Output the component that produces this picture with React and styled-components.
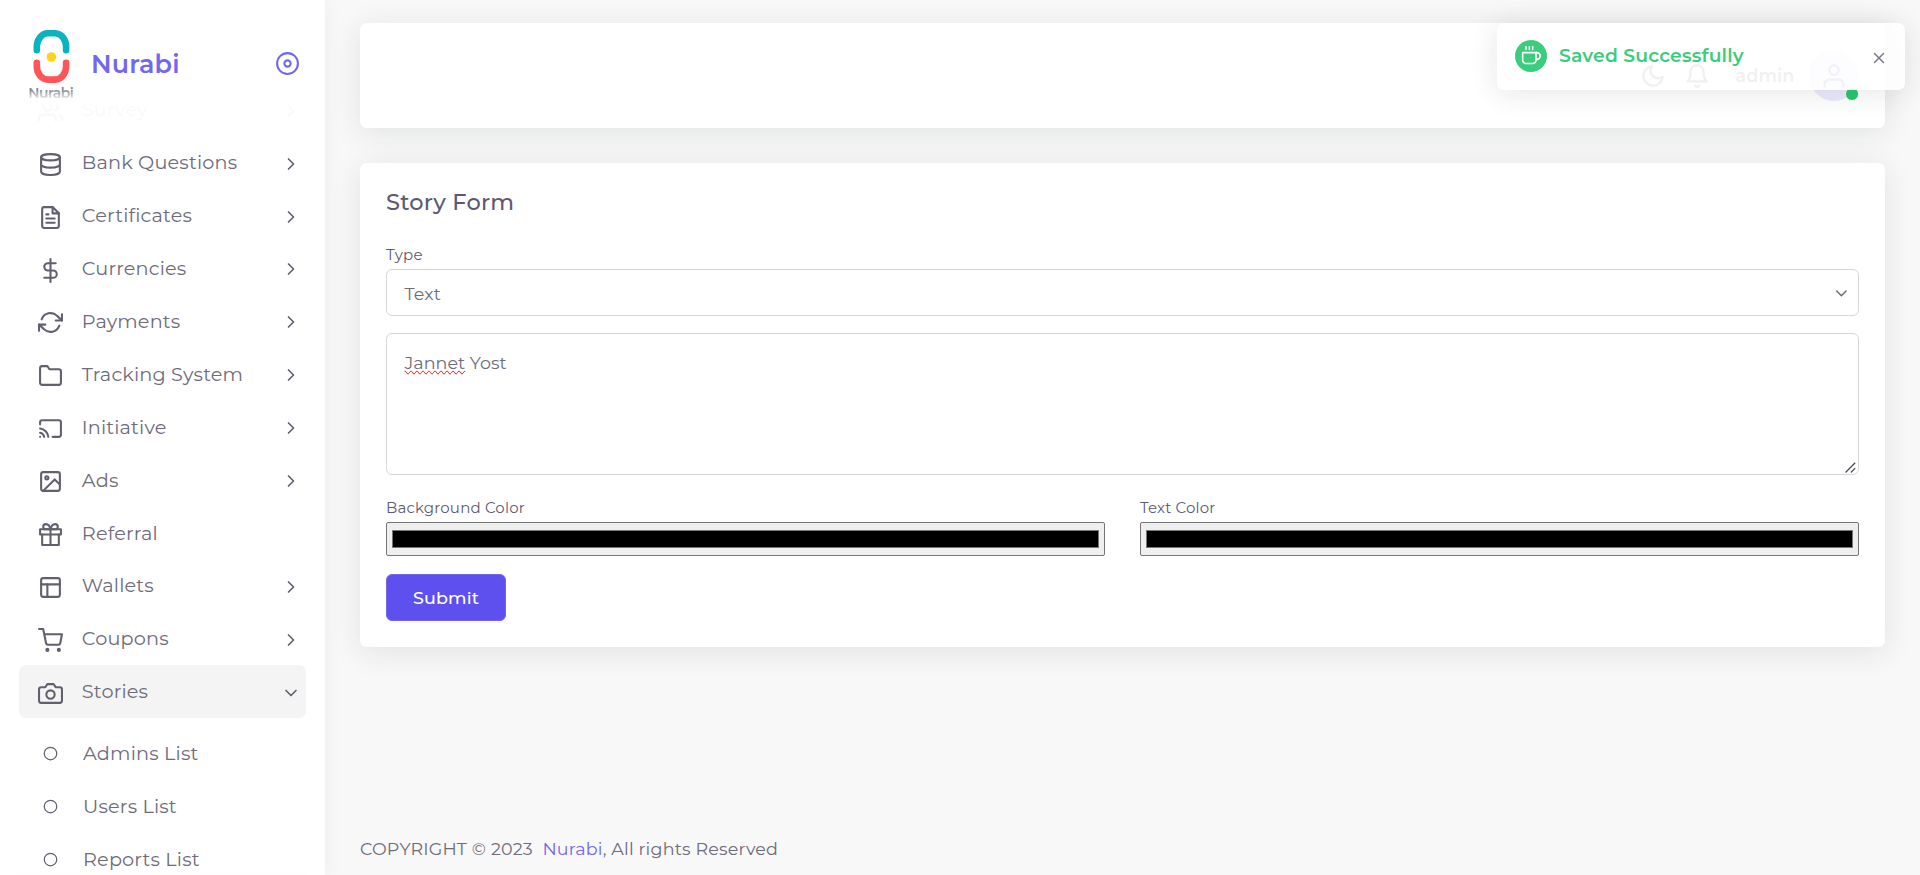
import React from 'react';
import styled, { createGlobalStyle, css } from 'styled-components';
import {
  FiBell, FiCamera, FiCast, FiChevronDown, FiChevronRight, FiCircle, FiCoffee, FiDatabase,
  FiDisc, FiDollarSign, FiFileText, FiFolder, FiGift, FiImage, FiLayout, FiMoon,
  FiRefreshCw, FiShoppingCart, FiUser, FiUsers, FiX,
} from 'react-icons/fi';

const color = {
  body: '#6e6b7b',
  heading: '#5e5873',
  icon: '#625f6e',
  primary: '#7367f0',
  success: '#28c76f',
  border: '#d8d6de',
  page: '#f8f8f8',
};

const Global = createGlobalStyle`
  *, *::before, *::after { box-sizing: border-box; }
  body {
    margin: 0;
    overflow: hidden;
    background: ${color.page};
    color: ${color.body};
    font-family: Montserrat, Inter, "Liberation Sans", sans-serif;
    font-size: 17.5px;
    font-weight: 400;
    line-height: 1.45;
    letter-spacing: 0.175px;
  }
  svg { display: block; flex-shrink: 0; overflow: visible; }
`;

const Page = styled.div`
  display: flex;
  width: 100%;
  height: 875px;
  overflow: hidden;
`;

const Sidebar = styled.aside`
  position: relative;
  z-index: 2;
  flex: 0 0 325px;
  height: 100%;
  overflow: visible;
  background: #fff;
  box-shadow: 0 0 19px rgba(34, 41, 47, 0.05);
`;

const Brand = styled.header`
  position: relative;
  z-index: 3;
  display: flex;
  align-items: center;
  height: 127px;
  margin-bottom: -43.4px;
  padding: 0 25px 0 26px;
`;

const BrandName = styled.h2`
  flex: 1;
  margin: 0 0 0 15px;
  color: ${color.primary};
  font-size: 25.4px;
  font-weight: 600;
  line-height: 1;
`;

const BrandPin = styled.span`
  color: ${color.primary};
`;

const ScrollFade = styled.div`
  position: absolute;
  z-index: 2;
  top: 80px;
  left: 0;
  right: 0;
  height: 55px;
  background: linear-gradient(#fff 43%, rgba(255, 255, 255, 0.97) 46%, rgba(255, 255, 255, 0.95) 74%, #fff 75%);
`;

const Menu = styled.nav`
  display: flex;
  flex-direction: column;
  height: 791.4px;
  padding: 0 19px;
  overflow: hidden;
`;

const MenuRow = styled.a`
  display: flex;
  flex: 0 0 52.9px;
  align-items: center;
  padding: 0 5.5px 0 19px;
  border-radius: 7px;
  color: ${color.body};
  font-size: 19.25px;
  ${(p) => p.$open && css`background: #f4f4f4; margin-bottom: 8.4px;`}

  > svg { color: ${color.icon}; position: relative; top: 1.3px; }
  > svg:last-child { top: 0.7px; }
`;

const MenuText = styled.span`
  flex: 1;
  margin-left: 18.8px;
  line-height: 1;
`;

const SubRow = styled(MenuRow)`
  flex-basis: 53px;
  padding-left: 24.4px;

  > svg { top: 0.5px; }
  ${MenuText} { margin-left: 24.6px; }
`;

const ActiveRow = styled.div`
  flex: 0 0 53px;
  border-radius: 5px;
  background: ${color.primary};
  box-shadow: 0 0 12px rgba(115, 103, 240, 0.6);
`;

const Content = styled.main`
  display: flex;
  flex: 1;
  flex-direction: column;
  min-width: 0;
  padding: 23px 35px 0;
`;

const cardLook = css`
  border-radius: 6.5px;
  background: #fff;
  box-shadow: 0 5px 30px rgba(34, 41, 47, 0.1);
`;

const Navbar = styled.header`
  ${cardLook}
  display: flex;
  flex: 0 0 105px;
  align-items: center;
  justify-content: flex-end;
  margin-bottom: 35px;
  padding-right: 26px;
`;

const NavIcon = styled.span`
  margin-right: 17.5px;
`;

const UserName = styled.span`
  margin: 0 14.5px 0 8px;
  font-weight: 600;
  line-height: 1;
`;

const Avatar = styled.span`
  position: relative;
  display: flex;
  align-items: center;
  justify-content: center;
  width: 50px;
  height: 50px;
  border-radius: 50%;
  background: rgba(115, 103, 240, 0.14);
  color: ${color.primary};
`;

const Status = styled.i`
  position: absolute;
  right: 0;
  bottom: 0;
  width: 13.75px;
  height: 13.75px;
  border: 1px solid #fff;
  border-radius: 50%;
  background: ${color.success};
`;

const Card = styled.section`
  ${cardLook}
  flex: 0 0 484px;
  padding: 26px;
`;

const Title = styled.h4`
  margin: 0 0 29px;
  color: ${color.heading};
  font-size: 22.5px;
  font-weight: 500;
  letter-spacing: 0.22px;
  line-height: 27px;
`;

const Field = styled.div`
  flex: 1;
  margin-bottom: ${(p) => p.$gap}px;
`;

const Label = styled.label`
  display: block;
  margin-bottom: 5px;
  color: ${color.heading};
  font-size: 15px;
  line-height: 19px;
`;

const Select = styled.div`
  display: flex;
  align-items: center;
  justify-content: space-between;
  height: 47px;
  padding: 2px 7.5px 0 17.5px;
  border: 1px solid ${color.border};
  border-radius: 6px;
`;

const TextBox = styled.div`
  position: relative;
  height: 142px;
  margin-bottom: 23px;
  padding: 15.5px 17.5px;
  border: 1px solid ${color.border};
  border-radius: 6px;
  letter-spacing: 0.05px;
`;

const Grip = styled.svg`
  position: absolute;
  right: 2px;
  bottom: 1px;
`;

const Misspelled = styled.span`
  text-decoration-line: spelling-error;
`;

const Columns = styled.div`
  display: flex;
  gap: 35px;
`;

const ColorInput = styled.input`
  display: block;
  width: 100%;
  height: 34px;
  padding: 2px;
  border: 1px solid #767676;
  border-radius: 2px;
  background: #efefef;

  &::-webkit-color-swatch-wrapper { padding: 5px 3px; }
  &::-webkit-color-swatch { border: 1px solid #777; }
`;

const Submit = styled.button`
  display: block;
  width: 120px;
  height: 47px;
  padding: 0;
  border: 1px solid ${color.primary};
  border-radius: 6px;
  background: #5e50ee;
  color: #fff;
  font: inherit;
  font-weight: 500;
  letter-spacing: 0.15px;
`;

const Footer = styled.footer`
  margin-top: auto;
  padding-bottom: 14px;
  white-space: pre;

  a { color: ${color.primary}; }
`;

const Toast = styled.div`
  position: absolute;
  z-index: 5;
  top: 23px;
  right: 15px;
  display: flex;
  width: 408px;
  height: 67px;
  padding: 17px 17px 0 17.5px;
  border-radius: 6.5px;
  background: #fff;
  box-shadow: 0 3px 28px rgba(34, 41, 47, 0.12);
  opacity: 0.9;
`;

const ToastIcon = styled.span`
  display: flex;
  align-items: center;
  justify-content: center;
  width: 32px;
  height: 32px;
  border-radius: 50%;
  background: ${color.success};
  color: #fff;
`;

const ToastText = styled.strong`
  flex: 1;
  margin-left: 12.5px;
  color: ${color.success};
  font-size: 18.75px;
  font-weight: 600;
  line-height: 32px;
`;

const ToastClose = styled.span`
  margin-top: 8.5px;
`;

function Logo() {
  return (
    <svg width="50" height="78" viewBox="0 0 50 78">
      <defs>
        <linearGradient id="caption" x1="0" y1="0" x2="0" y2="1">
          <stop offset="0.3" stopColor="#858c95" />
          <stop offset="0.8" stopColor="#e3e5e8" />
        </linearGradient>
      </defs>
      <g fill="none" strokeWidth="6.6" strokeLinecap="round">
        <path d="M10.8 25.2V22A11 13.7 0 0 1 21.8 8.3H29.3A11 13.7 0 0 1 40.1 22V25.2" stroke="#0bb3c1" />
        <path d="M10.8 37.8V41.2A11 13.4 0 0 0 21.8 54.6H29.3A11 13.4 0 0 0 40.1 41.2V37.8" stroke="#ff5558" />
      </g>
      <circle cx="25.4" cy="32" r="4.8" fill="#ffd31a" />
      <text x="2.2" y="73.3" textLength="45.8" fontSize="13.8" fontWeight="600" fill="url(#caption)">
        Nurabi
      </text>
    </svg>
  );
}

const menu = [
  { icon: FiUsers, text: 'Survey' },
  { icon: FiDatabase, text: 'Bank Questions' },
  { icon: FiFileText, text: 'Certificates' },
  { icon: FiDollarSign, text: 'Currencies' },
  { icon: FiRefreshCw, text: 'Payments' },
  { icon: FiFolder, text: 'Tracking System' },
  { icon: FiCast, text: 'Initiative' },
  { icon: FiImage, text: 'Ads' },
  { icon: FiGift, text: 'Referral', leaf: true },
  { icon: FiLayout, text: 'Wallets' },
  { icon: FiShoppingCart, text: 'Coupons' },
  { icon: FiCamera, text: 'Stories', open: true },
];

const stories = ['Admins List', 'Users List', 'Reports List'];

export default function App() {
  return (
    <Page>
      <Global />
      <Sidebar>
        <Brand>
          <Logo />
          <BrandName>Nurabi</BrandName>
          <BrandPin><FiDisc size={25} /></BrandPin>
        </Brand>
        <ScrollFade />
        <Menu>
          {menu.map(({ icon: Icon, text, leaf, open }) => (
            <MenuRow key={text} $open={open}>
              <Icon size={25} />
              <MenuText>{text}</MenuText>
              {!leaf && (open ? <FiChevronDown size={20} /> : <FiChevronRight size={20} />)}
            </MenuRow>
          ))}
          {stories.map((text) => (
            <SubRow key={text}>
              <FiCircle size={15} />
              <MenuText>{text}</MenuText>
            </SubRow>
          ))}
          <ActiveRow />
        </Menu>
      </Sidebar>

      <Content>
        <Navbar>
          <NavIcon><FiMoon size={26} /></NavIcon>
          <NavIcon><FiBell size={26} /></NavIcon>
          <UserName>admin</UserName>
          <Avatar>
            <FiUser size={28} />
            <Status />
          </Avatar>
        </Navbar>

        <Card>
          <Title>Story Form</Title>
          <Field $gap={17}>
            <Label>Type</Label>
            <Select>
              Text
              <FiChevronDown size={18.75} />
            </Select>
          </Field>
          <TextBox>
            <Misspelled>Jannet</Misspelled> Yost
            <Grip width="11" height="11" viewBox="0 0 11 11" stroke="#4d4d4d" strokeWidth="1.3">
              <path d="M0.5 10.5L10.2 0.8M5.8 10.5L10.2 6.1" />
            </Grip>
          </TextBox>
          <Columns>
            <Field $gap={18}>
              <Label>Background Color</Label>
              <ColorInput type="color" defaultValue="#000000" />
            </Field>
            <Field $gap={18}>
              <Label>Text Color</Label>
              <ColorInput type="color" defaultValue="#000000" />
            </Field>
          </Columns>
          <Submit>Submit</Submit>
        </Card>

        <Footer>
          {'COPYRIGHT © 2023  '}<a>Nurabi</a>, All rights Reserved
        </Footer>
      </Content>

      <Toast>
        <ToastIcon><FiCoffee size={20} /></ToastIcon>
        <ToastText>Saved Successfully</ToastText>
        <ToastClose><FiX size={18} /></ToastClose>
      </Toast>
    </Page>
  );
}
